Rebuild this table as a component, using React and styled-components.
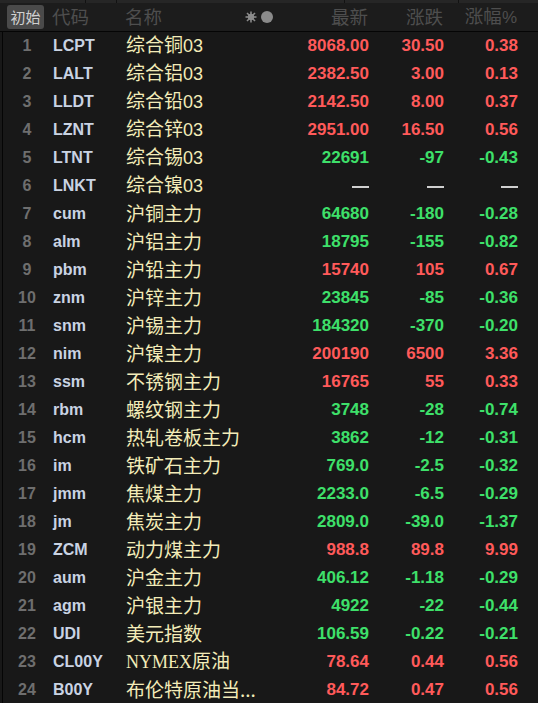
import React from "react";
import styled, { createGlobalStyle } from "styled-components";

const GlobalStyle = createGlobalStyle`
  html, body {
    margin: 0;
    padding: 0;
    background: #181818;
  }
  body {
    font-family: "Liberation Sans", "Noto Sans CJK SC", sans-serif;
  }
`;

const COLS = "50px 75px 148px 95px 75px 74px";

const Page = styled.div`
  width: 538px;
  height: 703px;
  overflow: hidden;
  background: #181818;
`;

const TopStrip = styled.div`
  height: 3px;
  background: #262626;
  display: grid;
  grid-template-columns: 86px 31px 228px 114px 1fr;
  & > span {
    border-right: 1px solid #121212;
  }
`;

const Header = styled.div`
  display: grid;
  grid-template-columns: ${COLS};
  align-items: center;
  height: 28px;
  background: #1c1c1c;
  border-bottom: 1px solid #050505;
  color: #4e4e4e;
  font-family: "Noto Sans CJK SC", sans-serif;
  font-size: 18.5px;
  line-height: 1;
`;

const StartButton = styled.div`
  justify-self: start;
  margin-left: 7px;
  width: 37px;
  height: 24px;
  line-height: 24px;
  text-align: center;
  border-radius: 3px;
  background: #4a4a4a;
  color: #d0d0d0;
  font-size: 15px;
`;

const HeadCell = styled.div`
  padding-left: ${(p) => (p.first ? "2px" : "0")};
  padding-bottom: 2px;
  display: flex;
  align-items: center;
  justify-content: space-between;
`;

const HeadValue = styled.div`
  padding-bottom: 2px;
  text-align: right;
  white-space: nowrap;
  & .pct {
    font-family: "Liberation Sans", sans-serif;
    font-size: 17px;
  }
`;

const Icons = styled.div`
  display: flex;
  align-items: center;
  gap: 4px;
  padding-top: 2px;
`;

const Body = styled.div`
  border-left: 1px solid #050505;
  margin-left: 2px;
`;

const Row = styled.div`
  display: grid;
  grid-template-columns: 48px 75px 148px 95px 75px 74px;
  align-items: center;
  height: 28px;
`;

const Index = styled.div`
  text-align: center;
  color: #6e6e6e;
  font-weight: bold;
  font-size: 16px;
`;

const Code = styled.div`
  padding-left: 2px;
  color: #c9d3e3;
  font-weight: bold;
  font-size: 16px;
`;

const Name = styled.div`
  color: #f3ecb8;
  font-family: "Noto Sans CJK SC", sans-serif;
  font-size: 19px;
  line-height: 1;
  padding-bottom: 4px;
  white-space: nowrap;
  & .latin {
    font-family: "Liberation Sans", sans-serif;
    font-size: 18px;
  }
  & .serif {
    font-family: "Liberation Serif", serif;
    font-size: 18px;
  }
`;

const Num = styled.div`
  text-align: right;
  font-weight: bold;
  font-size: 17px;
  color: ${(p) => (p.tone === "up" ? "#ff5a5a" : p.tone === "down" ? "#3ee06a" : "#cfcfcf")};
`;

const Dash = styled.span`
  display: inline-block;
  width: 17px;
  height: 2px;
  background: #cfcfcf;
  vertical-align: middle;
`;

const data = [
  ["LCPT", "综合铜03", "8068.00", "30.50", "0.38"],
  ["LALT", "综合铝03", "2382.50", "3.00", "0.13"],
  ["LLDT", "综合铅03", "2142.50", "8.00", "0.37"],
  ["LZNT", "综合锌03", "2951.00", "16.50", "0.56"],
  ["LTNT", "综合锡03", "22691", "-97", "-0.43"],
  ["LNKT", "综合镍03", null, null, null],
  ["cum", "沪铜主力", "64680", "-180", "-0.28"],
  ["alm", "沪铝主力", "18795", "-155", "-0.82"],
  ["pbm", "沪铅主力", "15740", "105", "0.67"],
  ["znm", "沪锌主力", "23845", "-85", "-0.36"],
  ["snm", "沪锡主力", "184320", "-370", "-0.20"],
  ["nim", "沪镍主力", "200190", "6500", "3.36"],
  ["ssm", "不锈钢主力", "16765", "55", "0.33"],
  ["rbm", "螺纹钢主力", "3748", "-28", "-0.74"],
  ["hcm", "热轧卷板主力", "3862", "-12", "-0.31"],
  ["im", "铁矿石主力", "769.0", "-2.5", "-0.32"],
  ["jmm", "焦煤主力", "2233.0", "-6.5", "-0.29"],
  ["jm", "焦炭主力", "2809.0", "-39.0", "-1.37"],
  ["ZCM", "动力煤主力", "988.8", "89.8", "9.99"],
  ["aum", "沪金主力", "406.12", "-1.18", "-0.29"],
  ["agm", "沪银主力", "4922", "-22", "-0.44"],
  ["UDI", "美元指数", "106.59", "-0.22", "-0.21"],
  ["CL00Y", "NYMEX原油", "78.64", "0.44", "0.56"],
  ["B00Y", "布伦特原油当...", "84.72", "0.47", "0.56"],
];

const toneOf = (chg) => {
  if (chg == null) return "flat";
  return chg.startsWith("-") ? "down" : "up";
};

const renderName = (name) => {
  if (name.startsWith("NYMEX")) {
    return (
      <>
        <span className="serif">NYMEX</span>
        {name.slice(5)}
      </>
    );
  }
  if (name.endsWith("03")) {
    return (
      <>
        {name.slice(0, -2)}
        <span className="latin">03</span>
      </>
    );
  }
  return name;
};

const Cell = ({ value, tone }) => (
  <Num tone={tone}>{value == null ? <Dash /> : value}</Num>
);

const App = () => {
  return (
    <Page>
      <GlobalStyle />
      <TopStrip>
        <span />
        <span />
        <span />
        <span />
      </TopStrip>
      <Header>
        <StartButton>初始</StartButton>
        <HeadCell first>代码</HeadCell>
        <HeadCell>
          名称
          <Icons>
            <svg width="12" height="12" viewBox="0 0 12 12">
              <g stroke="#8a8a8a" strokeWidth="1.6">
                <line x1="6" y1="0.5" x2="6" y2="11.5" />
                <line x1="0.5" y1="6" x2="11.5" y2="6" />
                <line x1="2" y1="2" x2="10" y2="10" />
                <line x1="10" y1="2" x2="2" y2="10" />
              </g>
              <circle cx="6" cy="6" r="3.2" fill="#8a8a8a" />
            </svg>
            <svg width="12" height="12" viewBox="0 0 12 12">
              <circle cx="6" cy="6" r="6" fill="#8a8a8a" />
            </svg>
          </Icons>
        </HeadCell>
        <HeadValue>最新</HeadValue>
        <HeadValue>涨跌</HeadValue>
        <HeadValue>
          涨幅<span className="pct">%</span>
        </HeadValue>
      </Header>
      <Body>
        {data.map(([code, name, price, chg, pct], i) => {
          const tone = toneOf(chg);
          return (
            <Row key={code}>
              <Index>{i + 1}</Index>
              <Code>{code}</Code>
              <Name>{renderName(name)}</Name>
              <Cell value={price} tone={tone} />
              <Cell value={chg} tone={tone} />
              <Cell value={pct} tone={tone} />
            </Row>
          );
        })}
      </Body>
    </Page>
  );
};

export default App;
